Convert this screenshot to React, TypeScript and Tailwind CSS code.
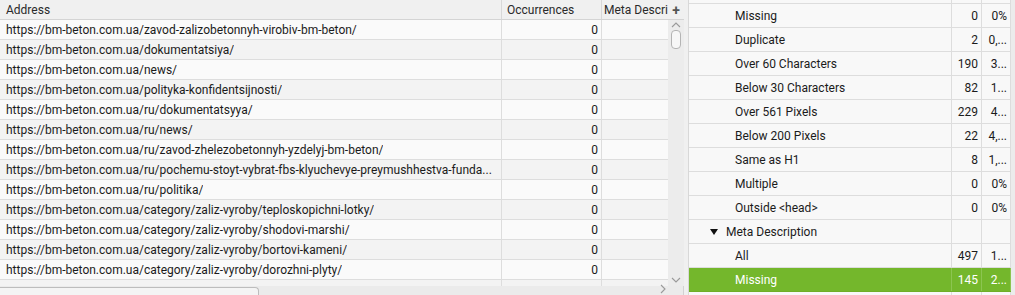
import * as React from "react";

type Row = { url: string; occ: string };

const ROWS: Row[] = [
  { url: "https://bm-beton.com.ua/zavod-zalizobetonnyh-virobiv-bm-beton/", occ: "0" },
  { url: "https://bm-beton.com.ua/dokumentatsiya/", occ: "0" },
  { url: "https://bm-beton.com.ua/news/", occ: "0" },
  { url: "https://bm-beton.com.ua/polityka-konfidentsijnosti/", occ: "0" },
  { url: "https://bm-beton.com.ua/ru/dokumentatsyya/", occ: "0" },
  { url: "https://bm-beton.com.ua/ru/news/", occ: "0" },
  { url: "https://bm-beton.com.ua/ru/zavod-zhelezobetonnyh-yzdelyj-bm-beton/", occ: "0" },
  { url: "https://bm-beton.com.ua/ru/pochemu-stoyt-vybrat-fbs-klyuchevye-preymushhestva-funda...", occ: "0" },
  { url: "https://bm-beton.com.ua/ru/politika/", occ: "0" },
  { url: "https://bm-beton.com.ua/category/zaliz-vyroby/teploskopichni-lotky/", occ: "0" },
  { url: "https://bm-beton.com.ua/category/zaliz-vyroby/shodovi-marshi/", occ: "0" },
  { url: "https://bm-beton.com.ua/category/zaliz-vyroby/bortovi-kameni/", occ: "0" },
  { url: "https://bm-beton.com.ua/category/zaliz-vyroby/dorozhni-plyty/", occ: "0" },
];

type Issue = { label: string; count?: string; pct?: string; group?: boolean; active?: boolean };

const ISSUES: Issue[] = [
  { label: "Missing", count: "0", pct: "0%" },
  { label: "Duplicate", count: "2", pct: "0,..." },
  { label: "Over 60 Characters", count: "190", pct: "3..." },
  { label: "Below 30 Characters", count: "82", pct: "1..." },
  { label: "Over 561 Pixels", count: "229", pct: "4..." },
  { label: "Below 200 Pixels", count: "22", pct: "4,..." },
  { label: "Same as H1", count: "8", pct: "1,..." },
  { label: "Multiple", count: "0", pct: "0%" },
  { label: "Outside <head>", count: "0", pct: "0%" },
  { label: "Meta Description", group: true },
  { label: "All", count: "497", pct: "1..." },
  { label: "Missing", count: "145", pct: "2...", active: true },
];

function Chevron({ dir }: { dir: "up" | "down" | "right" }) {
  const d = dir === "up" ? "M1 5l4-4 4 4" : dir === "down" ? "M1 1l4 4 4-4" : "M1 1l4 4-4 4";
  const w = dir === "right" ? 6 : 10;
  const h = dir === "right" ? 10 : 6;
  return (
    <svg width={w} height={h} viewBox={dir === "right" ? "0 0 6 10" : "0 0 10 6"} fill="none" aria-hidden>
      <path d={d} stroke="#9a9a9a" strokeWidth="1.1" />
    </svg>
  );
}

export default function App() {
  return (
    <div className="flex h-[295px] w-[1015px] overflow-hidden bg-[#f0f0f0] font-['Roboto',sans-serif] text-[12px] text-[#1b1b1b]">
      {/* Left table */}
      <div className="flex w-[684px] shrink-0 flex-col border-r border-[#d2d2d2]">
        <div className="flex min-h-0 flex-1">
          <div className="flex w-[668px] shrink-0 flex-col overflow-hidden bg-[#fafafa]">
            <div className="grid h-[20px] shrink-0 grid-cols-[502px_100px_66px] border-b border-[#d4d4d4] bg-[#f0f0f0] text-[#2a2a2a]">
              <div className="flex items-center border-r border-[#d8d8d8] px-[6px]">Address</div>
              <div className="flex items-center border-r border-[#d8d8d8] px-[5px]">Occurrences</div>
              <div className="flex items-center overflow-hidden whitespace-nowrap px-[2px]">Meta Descri</div>
            </div>
            {ROWS.map((r, i) => (
              <div
                key={i}
                className={`grid h-[20px] shrink-0 grid-cols-[502px_100px_66px] border-b border-[#dddddd] ${
                  i % 2 === 0 ? "bg-[#fafafa]" : "bg-[#f3f3f3]"
                }`}
              >
                <div className="flex items-center overflow-hidden whitespace-nowrap border-r border-[#dddddd] pl-[6px] pr-[4px]">
                  <span className="overflow-hidden">{r.url}</span>
                </div>
                <div className="flex items-center justify-end border-r border-[#dddddd] pr-[3px]">{r.occ}</div>
                <div />
              </div>
            ))}
            <div className="grid flex-1 grid-cols-[502px_100px_66px] bg-[#f3f3f3]">
              <div className="border-r border-[#dddddd]" />
              <div className="border-r border-[#dddddd]" />
              <div />
            </div>
          </div>
          {/* vertical scrollbar */}
          <div className="flex w-[16px] shrink-0 flex-col bg-[#ececec]">
            <div className="flex h-[20px] shrink-0 items-center justify-center border-b border-[#d4d4d4] bg-[#f0f0f0] text-[14px] font-bold leading-none text-[#555]">
              +
            </div>
            <div className="flex h-[8px] items-center justify-center pt-[2px]">
              <Chevron dir="up" />
            </div>
            <div className="mx-auto mt-[2px] h-[19px] w-[10px] rounded-[4px] border border-[#b4b4b4] bg-[#f7f7f7]" />
            <div className="flex-1" />
            <div className="flex h-[10px] items-center justify-center pb-[3px]">
              <Chevron dir="down" />
            </div>
          </div>
        </div>
        {/* horizontal scrollbar */}
        <div className="flex h-[9px] shrink-0 items-end bg-[#ebebeb]">
          <div className="h-[8px] w-[259px] rounded-tr-[4px] border-r border-t border-[#bdbdbd] bg-[#f4f4f4]" />
          <div className="flex-1" />
          <div className="flex w-[24px] items-center justify-start pb-[1px] pl-[1px]">
            <Chevron dir="right" />
          </div>
        </div>
      </div>

      {/* splitter */}
      <div className="w-[4px] shrink-0 bg-[#f0f0f0]" />

      {/* Right panel */}
      <div className="flex flex-1 border-l border-[#d8d8d8]">
        <div className="flex w-[322px] shrink-0 flex-col bg-[#f8f8f8]">
          <div className="grid h-[4px] shrink-0 grid-cols-[263px_30px_29px] border-b border-[#dddddd]">
            <div className="border-r border-[#dddddd]" />
            <div className="border-r border-[#dddddd]" />
            <div className="border-r border-[#dddddd]" />
          </div>
          {ISSUES.map((it, i) => (
            <div
              key={i}
              className={`grid h-[24px] shrink-0 grid-cols-[263px_30px_29px] border-b ${
                it.active ? "border-[#6fae28] bg-[#74b72c] text-white" : "border-[#dddddd]"
              }`}
            >
              <div
                className={`flex items-center border-r ${it.active ? "border-[#8cc550]" : "border-[#dddddd]"} ${
                  it.group ? "pl-[21px]" : "pl-[46px]"
                }`}
              >
                {it.group && (
                  <svg width="8" height="6" viewBox="0 0 8 6" className="mr-[8px]" aria-hidden>
                    <path d="M0 0h8L4 6z" fill="#111" />
                  </svg>
                )}
                {it.label}
              </div>
              <div
                className={`flex items-center justify-end border-r pr-[3px] ${
                  it.active ? "border-[#8cc550]" : "border-[#dddddd]"
                }`}
              >
                {it.count}
              </div>
              <div
                className={`flex items-center justify-end border-r pr-[3px] ${
                  it.active ? "border-[#8cc550]" : "border-[#dddddd]"
                }`}
              >
                {it.pct}
              </div>
            </div>
          ))}
          <div className="grid flex-1 grid-cols-[263px_30px_29px]">
            <div className="border-r border-[#dddddd]" />
            <div className="border-r border-[#dddddd]" />
            <div className="border-r border-[#dddddd]" />
          </div>
        </div>
        <div className="flex-1 bg-[#ececec]" />
      </div>
    </div>
  );
}
